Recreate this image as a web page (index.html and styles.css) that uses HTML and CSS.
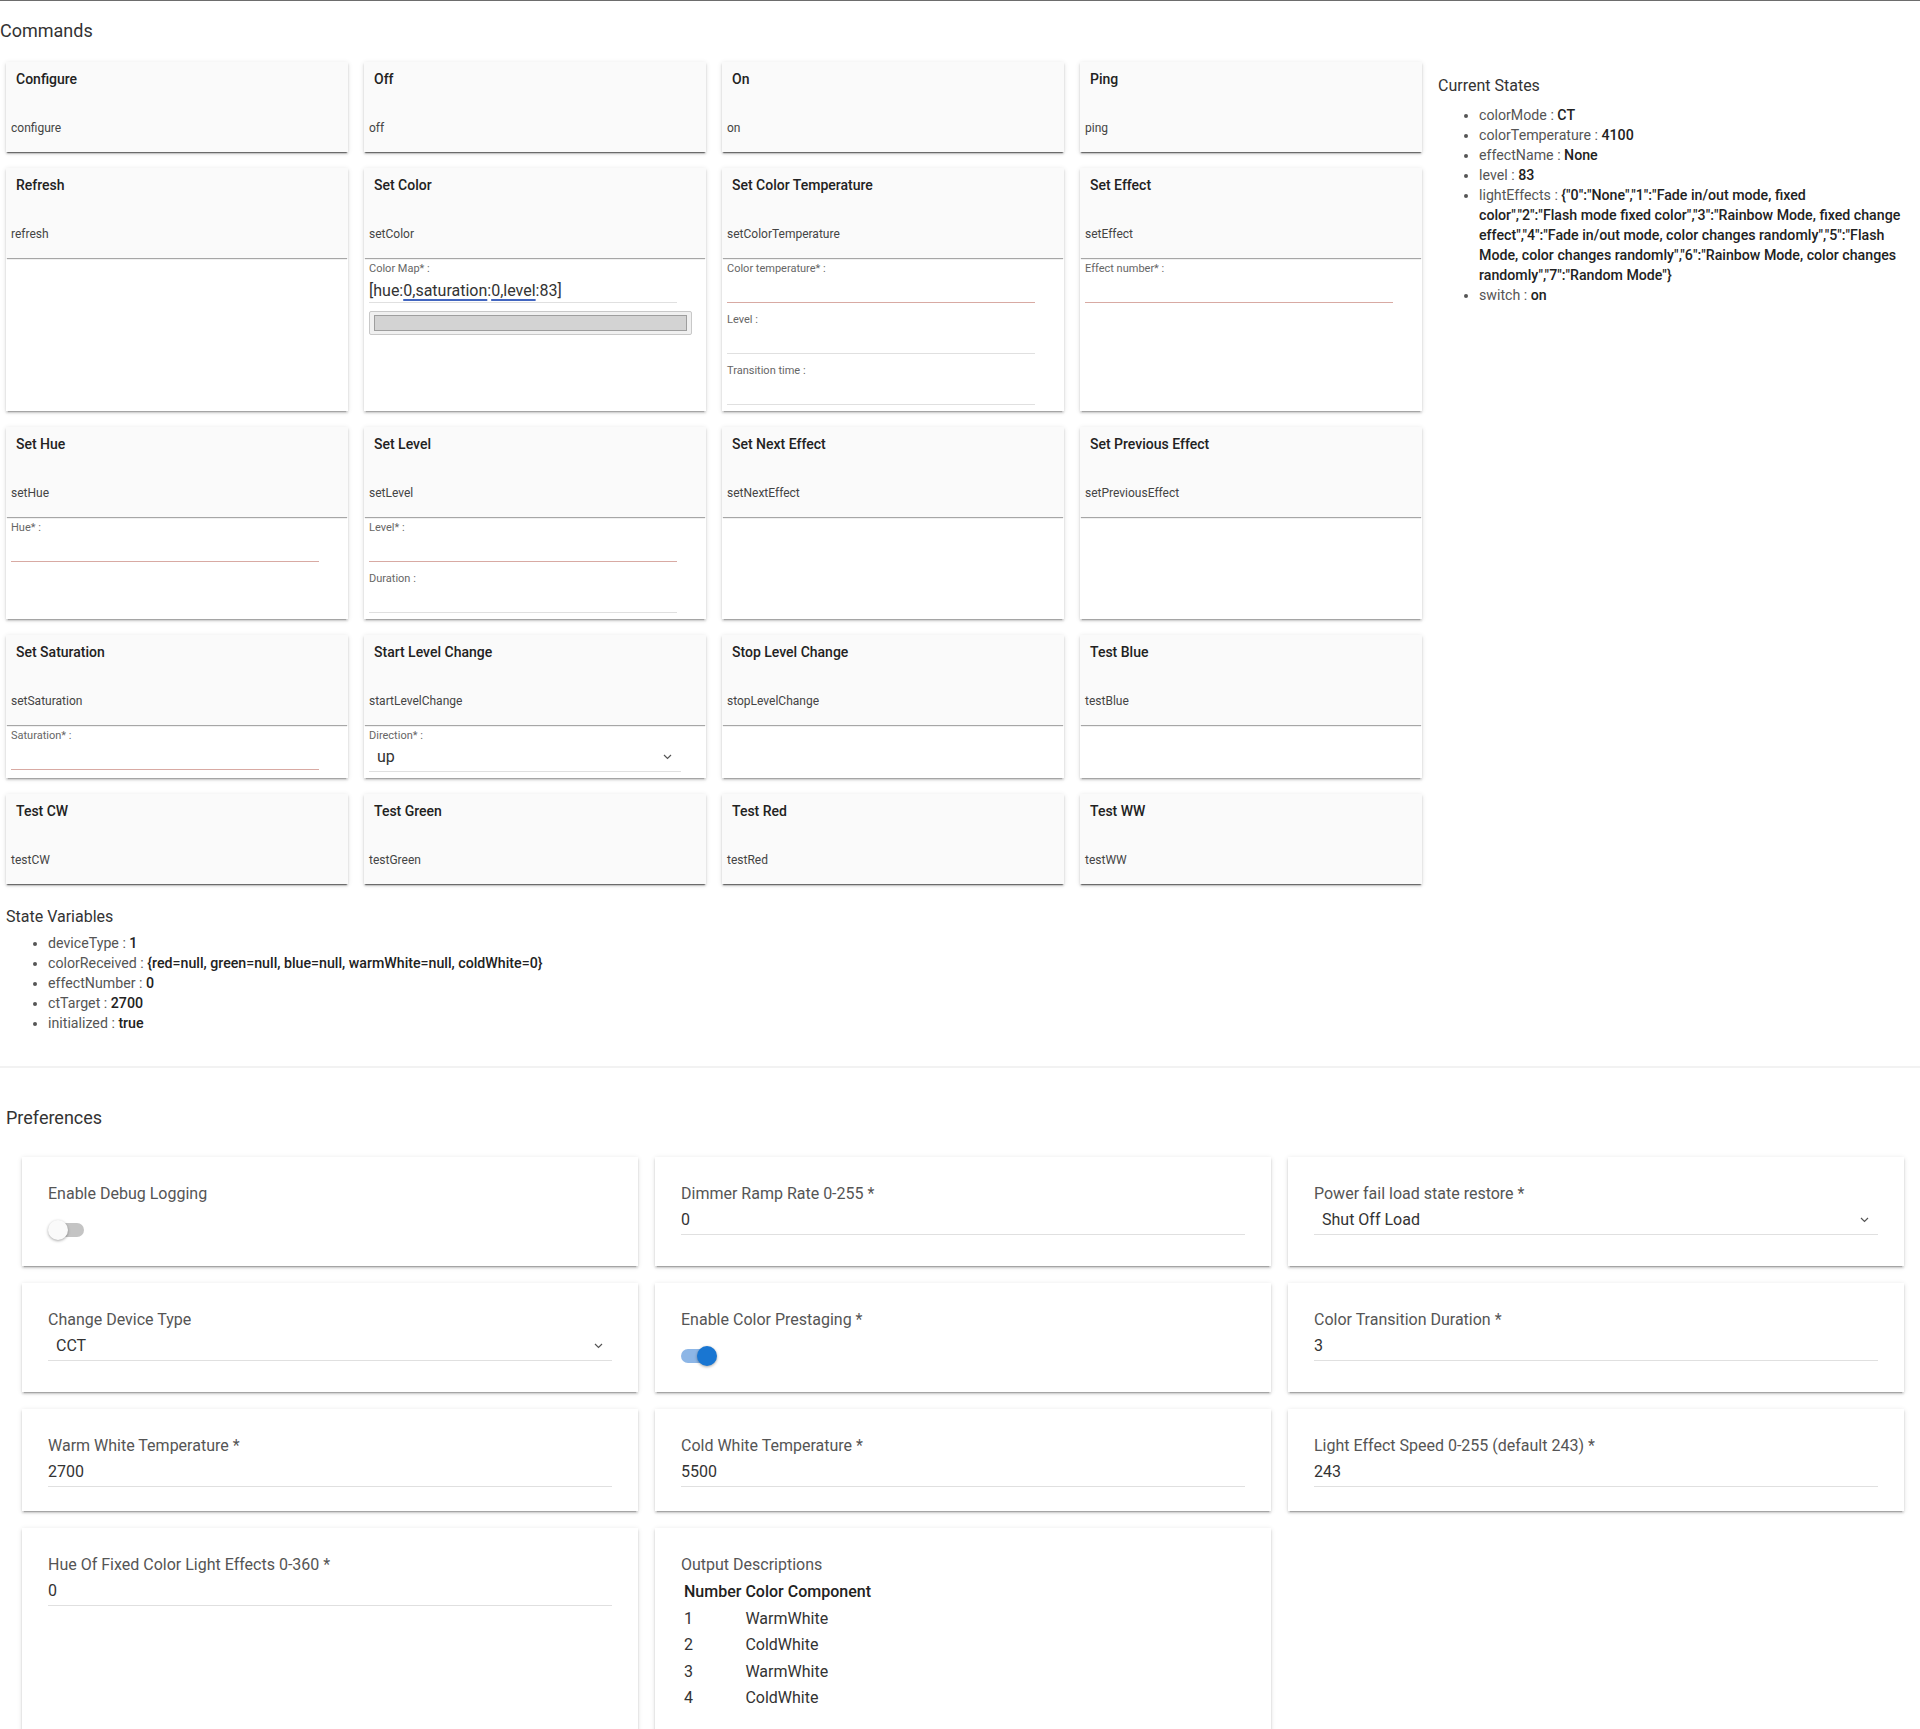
FILE: index.html
```html
<!DOCTYPE html>
<html lang="en">
<head>
    <meta charset="UTF-8">
    <meta name="viewport" content="width=device-width, initial-scale=1.0">
    <title>Device Commands</title>
    <link rel="stylesheet" href="styles.css">
</head>
<body>
<div class="page">
    <h2 class="section-title">Commands</h2>
    <div class="commands">
        <div class="cmd-grid">
            <div class="cmd">
                <div class="cmd-head"><div class="cmd-title">Configure</div><div class="cmd-name">configure</div></div>
                <div class="cmd-body"></div>
            </div>
            <div class="cmd">
                <div class="cmd-head"><div class="cmd-title">Off</div><div class="cmd-name">off</div></div>
                <div class="cmd-body"></div>
            </div>
            <div class="cmd">
                <div class="cmd-head"><div class="cmd-title">On</div><div class="cmd-name">on</div></div>
                <div class="cmd-body"></div>
            </div>
            <div class="cmd">
                <div class="cmd-head"><div class="cmd-title">Ping</div><div class="cmd-name">ping</div></div>
                <div class="cmd-body"></div>
            </div>

            <div class="cmd">
                <div class="cmd-head"><div class="cmd-title">Refresh</div><div class="cmd-name">refresh</div></div>
                <div class="cmd-body"></div>
            </div>
            <div class="cmd">
                <div class="cmd-head"><div class="cmd-title">Set Color</div><div class="cmd-name">setColor</div></div>
                <div class="cmd-body">
                    <div class="field">
                        <div class="field-label">Color Map* :</div>
                        <div class="field-input filled">[hue:<span class="spell">0,saturation</span>:<span class="spell">0,level</span>:83]</div>
                        <div class="color-box"><div class="color-swatch"></div></div>
                    </div>
                </div>
            </div>
            <div class="cmd">
                <div class="cmd-head"><div class="cmd-title">Set Color Temperature</div><div class="cmd-name">setColorTemperature</div></div>
                <div class="cmd-body">
                    <div class="field">
                        <div class="field-label">Color temperature* :</div>
                        <div class="field-input required"></div>
                    </div>
                    <div class="field">
                        <div class="field-label">Level :</div>
                        <div class="field-input"></div>
                    </div>
                    <div class="field">
                        <div class="field-label">Transition time :</div>
                        <div class="field-input"></div>
                    </div>
                </div>
            </div>
            <div class="cmd">
                <div class="cmd-head"><div class="cmd-title">Set Effect</div><div class="cmd-name">setEffect</div></div>
                <div class="cmd-body">
                    <div class="field">
                        <div class="field-label">Effect number* :</div>
                        <div class="field-input required"></div>
                    </div>
                </div>
            </div>

            <div class="cmd">
                <div class="cmd-head"><div class="cmd-title">Set Hue</div><div class="cmd-name">setHue</div></div>
                <div class="cmd-body">
                    <div class="field">
                        <div class="field-label">Hue* :</div>
                        <div class="field-input required"></div>
                    </div>
                </div>
            </div>
            <div class="cmd">
                <div class="cmd-head"><div class="cmd-title">Set Level</div><div class="cmd-name">setLevel</div></div>
                <div class="cmd-body">
                    <div class="field">
                        <div class="field-label">Level* :</div>
                        <div class="field-input required"></div>
                    </div>
                    <div class="field">
                        <div class="field-label">Duration :</div>
                        <div class="field-input"></div>
                    </div>
                </div>
            </div>
            <div class="cmd">
                <div class="cmd-head"><div class="cmd-title">Set Next Effect</div><div class="cmd-name">setNextEffect</div></div>
                <div class="cmd-body"></div>
            </div>
            <div class="cmd">
                <div class="cmd-head"><div class="cmd-title">Set Previous Effect</div><div class="cmd-name">setPreviousEffect</div></div>
                <div class="cmd-body"></div>
            </div>

            <div class="cmd">
                <div class="cmd-head"><div class="cmd-title">Set Saturation</div><div class="cmd-name">setSaturation</div></div>
                <div class="cmd-body">
                    <div class="field">
                        <div class="field-label">Saturation* :</div>
                        <div class="field-input required"></div>
                    </div>
                </div>
            </div>
            <div class="cmd">
                <div class="cmd-head"><div class="cmd-title">Start Level Change</div><div class="cmd-name">startLevelChange</div></div>
                <div class="cmd-body">
                    <div class="field">
                        <div class="field-label">Direction* :</div>
                        <div class="field-select">
                            <span>up</span>
                            <svg class="chevron" width="9" height="6" viewBox="0 0 9 6"><path d="M1 1l3.5 3.5L8 1" fill="none" stroke="#555" stroke-width="1.2"/></svg>
                        </div>
                    </div>
                </div>
            </div>
            <div class="cmd">
                <div class="cmd-head"><div class="cmd-title">Stop Level Change</div><div class="cmd-name">stopLevelChange</div></div>
                <div class="cmd-body"></div>
            </div>
            <div class="cmd">
                <div class="cmd-head"><div class="cmd-title">Test Blue</div><div class="cmd-name">testBlue</div></div>
                <div class="cmd-body"></div>
            </div>

            <div class="cmd">
                <div class="cmd-head"><div class="cmd-title">Test CW</div><div class="cmd-name">testCW</div></div>
                <div class="cmd-body"></div>
            </div>
            <div class="cmd">
                <div class="cmd-head"><div class="cmd-title">Test Green</div><div class="cmd-name">testGreen</div></div>
                <div class="cmd-body"></div>
            </div>
            <div class="cmd">
                <div class="cmd-head"><div class="cmd-title">Test Red</div><div class="cmd-name">testRed</div></div>
                <div class="cmd-body"></div>
            </div>
            <div class="cmd">
                <div class="cmd-head"><div class="cmd-title">Test WW</div><div class="cmd-name">testWW</div></div>
                <div class="cmd-body"></div>
            </div>
        </div>

        <div class="states">
            <h3>Current States</h3>
            <ul>
                <li>colorMode : <b>CT</b></li>
                <li>colorTemperature : <b>4100</b></li>
                <li>effectName : <b>None</b></li>
                <li>level : <b>83</b></li>
                <li>lightEffects : <b>{"0":"None","1":"Fade in/out mode, fixed<br>color","2":"Flash mode fixed color","3":"Rainbow Mode, fixed change<br>effect","4":"Fade in/out mode, color changes randomly","5":"Flash<br>Mode, color changes randomly","6":"Rainbow Mode, color changes<br>randomly","7":"Random Mode"}</b></li>
                <li>switch : <b>on</b></li>
            </ul>
        </div>
    </div>

    <div class="state-vars">
        <h3>State Variables</h3>
        <ul>
            <li>deviceType : <b>1</b></li>
            <li>colorReceived : <b>{red=null, green=null, blue=null, warmWhite=null, coldWhite=0}</b></li>
            <li>effectNumber : <b>0</b></li>
            <li>ctTarget : <b>2700</b></li>
            <li>initialized : <b>true</b></li>
        </ul>
    </div>

    <div class="prefs">
        <h2 class="section-title">Preferences</h2>
        <div class="pref-grid">
            <div class="pref">
                <div class="pref-label">Enable Debug Logging</div>
                <div class="toggle"><span class="toggle-track"></span><span class="toggle-knob"></span></div>
            </div>
            <div class="pref">
                <div class="pref-label">Dimmer Ramp Rate 0-255 *</div>
                <div class="pref-input">0</div>
            </div>
            <div class="pref">
                <div class="pref-label">Power fail load state restore *</div>
                <div class="pref-select">
                    <span>Shut Off Load</span>
                    <svg class="chevron" width="9" height="6" viewBox="0 0 9 6"><path d="M1 1l3.5 3.5L8 1" fill="none" stroke="#555" stroke-width="1.2"/></svg>
                </div>
            </div>

            <div class="pref">
                <div class="pref-label">Change Device Type</div>
                <div class="pref-select">
                    <span>CCT</span>
                    <svg class="chevron" width="9" height="6" viewBox="0 0 9 6"><path d="M1 1l3.5 3.5L8 1" fill="none" stroke="#555" stroke-width="1.2"/></svg>
                </div>
            </div>
            <div class="pref">
                <div class="pref-label">Enable Color Prestaging *</div>
                <div class="toggle on"><span class="toggle-track"></span><span class="toggle-knob"></span></div>
            </div>
            <div class="pref">
                <div class="pref-label">Color Transition Duration *</div>
                <div class="pref-input">3</div>
            </div>

            <div class="pref">
                <div class="pref-label">Warm White Temperature *</div>
                <div class="pref-input">2700</div>
            </div>
            <div class="pref">
                <div class="pref-label">Cold White Temperature *</div>
                <div class="pref-input">5500</div>
            </div>
            <div class="pref">
                <div class="pref-label">Light Effect Speed 0-255 (default 243) *</div>
                <div class="pref-input">243</div>
            </div>

            <div class="pref">
                <div class="pref-label">Hue Of Fixed Color Light Effects 0-360 *</div>
                <div class="pref-input">0</div>
            </div>
            <div class="pref">
                <div class="pref-label">Output Descriptions</div>
                <table class="outputs">
                    <tr><th>Number</th><th>Color Component</th></tr>
                    <tr><td>1</td><td>WarmWhite</td></tr>
                    <tr><td>2</td><td>ColdWhite</td></tr>
                    <tr><td>3</td><td>WarmWhite</td></tr>
                    <tr><td>4</td><td>ColdWhite</td></tr>
                </table>
            </div>
        </div>
    </div>
</div>
</body>
</html>
```

FILE: styles.css
```css
body {
    margin: 0;
    font-family: Roboto, "Noto Sans", Arial, sans-serif;
    color: #333;
    background: #fff;
}
.page {
    border-top: 1px solid #6d6d6d;
}
.section-title {
    margin: 0;
    padding-top: 18px;
    font-size: 18px;
    font-weight: 400;
    line-height: 24px;
    color: #333;
}

/* commands */
.commands {
    display: flex;
    align-items: flex-start;
    margin-top: 19px;
}
.cmd-grid {
    display: grid;
    grid-template-columns: repeat(4, 342px);
    gap: 16px;
    margin-left: 6px;
}
.cmd {
    display: flex;
    flex-direction: column;
    background: #fff;
    box-shadow: 0 2px 2px 0 rgba(0, 0, 0, 0.14), 0 3px 1px -2px rgba(0, 0, 0, 0.2), 0 1px 5px 0 rgba(0, 0, 0, 0.12);
}
.cmd-head {
    height: 90px;
    box-sizing: border-box;
    padding: 7px 0 16px;
    display: flex;
    flex-direction: column;
    justify-content: space-between;
    background: #fafafa;
    box-shadow: 0 2px 1px -1px rgba(0, 0, 0, 0.35);
    position: relative;
    z-index: 1;
}
.cmd-title {
    margin-left: 10px;
    font-size: 14px;
    font-weight: 500;
    line-height: 20px;
    color: #222;
}
.cmd-name {
    margin-left: 5px;
    font-size: 12px;
    line-height: 16px;
    color: #444;
}
.cmd-body {
    flex: 1;
    padding: 4px 5px 6px;
}
.cmd-body:empty {
    padding: 0;
}
.field {
    margin-bottom: 10px;
}
.field:last-child {
    margin-bottom: 0;
}
.field-label {
    font-size: 11px;
    line-height: 13px;
    color: #666;
}
.field-input {
    width: 308px;
    height: 28px;
    box-sizing: border-box;
    border-bottom: 1px solid #e0e0e0;
    font-size: 16px;
    line-height: 31px;
    color: #333;
}
.field-input.required {
    border-bottom-color: #d8aaa3;
}
.spell {
    text-decoration: underline;
    text-decoration-color: #4266c0;
    text-decoration-thickness: 2px;
    text-underline-offset: 3px;
}
.color-box {
    width: 323px;
    height: 24px;
    margin-top: 8px;
    box-sizing: border-box;
    padding: 3px 4px;
    border: 1px solid #c8c8c8;
    border-radius: 2px;
    background: #f0f0f0;
}
.color-swatch {
    height: 100%;
    box-sizing: border-box;
    border: 1px solid #9e9e9e;
    background: #d3d3d3;
}
.field-select {
    width: 312px;
    height: 30px;
    box-sizing: border-box;
    padding: 0 9px 0 8px;
    display: flex;
    justify-content: space-between;
    align-items: center;
    border-bottom: 1px solid #e0e0e0;
    font-size: 16px;
    color: #333;
}

/* states */
.states {
    flex: 1;
    margin-left: 16px;
    padding: 13px 8px 0 0;
}
.states h3,
.state-vars h3 {
    margin: 0;
    font-size: 16px;
    font-weight: 400;
    line-height: 22px;
    color: #333;
}
.states ul,
.state-vars ul {
    margin: 8px 0 0;
    padding-left: 41px;
    font-size: 14.2px;
    line-height: 20px;
    color: #555;
}
.states b,
.state-vars b {
    font-weight: 500;
    color: #222;
}
.state-vars {
    padding: 22px 0 0 6px;
    margin-bottom: 33px;
}
.state-vars ul {
    margin-top: 5px;
    padding-left: 42px;
}

/* preferences */
.prefs {
    border-top: 2px solid #f2f2f2;
    padding-top: 38px;
}
.prefs .section-title {
    padding: 0 0 0 6px;
}
.pref-grid {
    display: grid;
    grid-template-columns: repeat(3, 616px);
    gap: 17px;
    margin: 27px 0 0 22px;
}
.pref {
    padding: 26px 26px 24px;
    background: #fff;
    box-shadow: 0 2px 2px 0 rgba(0, 0, 0, 0.14), 0 3px 1px -2px rgba(0, 0, 0, 0.2), 0 1px 5px 0 rgba(0, 0, 0, 0.12);
}
.pref-label {
    font-size: 16px;
    line-height: 22px;
    color: #555;
}
.pref-input {
    height: 30px;
    box-sizing: border-box;
    border-bottom: 1px solid #e0e0e0;
    font-size: 16px;
    line-height: 30px;
    color: #333;
}
.pref-select {
    height: 30px;
    margin-bottom: 7px;
    box-sizing: border-box;
    padding: 0 9px 0 8px;
    display: flex;
    justify-content: space-between;
    align-items: center;
    border-bottom: 1px solid #e0e0e0;
    font-size: 16px;
    color: #333;
}
.toggle {
    position: relative;
    width: 36px;
    height: 20px;
    margin-top: 15px;
}
.toggle-track {
    position: absolute;
    left: 2px;
    top: 3px;
    width: 34px;
    height: 14px;
    border-radius: 7px;
    background: #c4c4c4;
}
.toggle-knob {
    position: absolute;
    left: 0;
    top: 0;
    width: 20px;
    height: 20px;
    border-radius: 50%;
    background: #fafafa;
    box-shadow: 0 1px 3px rgba(0, 0, 0, 0.35);
}
.toggle.on .toggle-track {
    left: 0;
    background: #8db6e6;
}
.toggle.on .toggle-knob {
    left: 16px;
    background: #1976d2;
}
.outputs {
    margin-top: 2px;
    border-spacing: 2px;
    font-size: 16px;
    line-height: 20.5px;
    color: #333;
}
.outputs th,
.outputs td {
    padding: 2px 1px;
    text-align: left;
}
.outputs th {
    font-weight: 500;
    color: #222;
}
```
